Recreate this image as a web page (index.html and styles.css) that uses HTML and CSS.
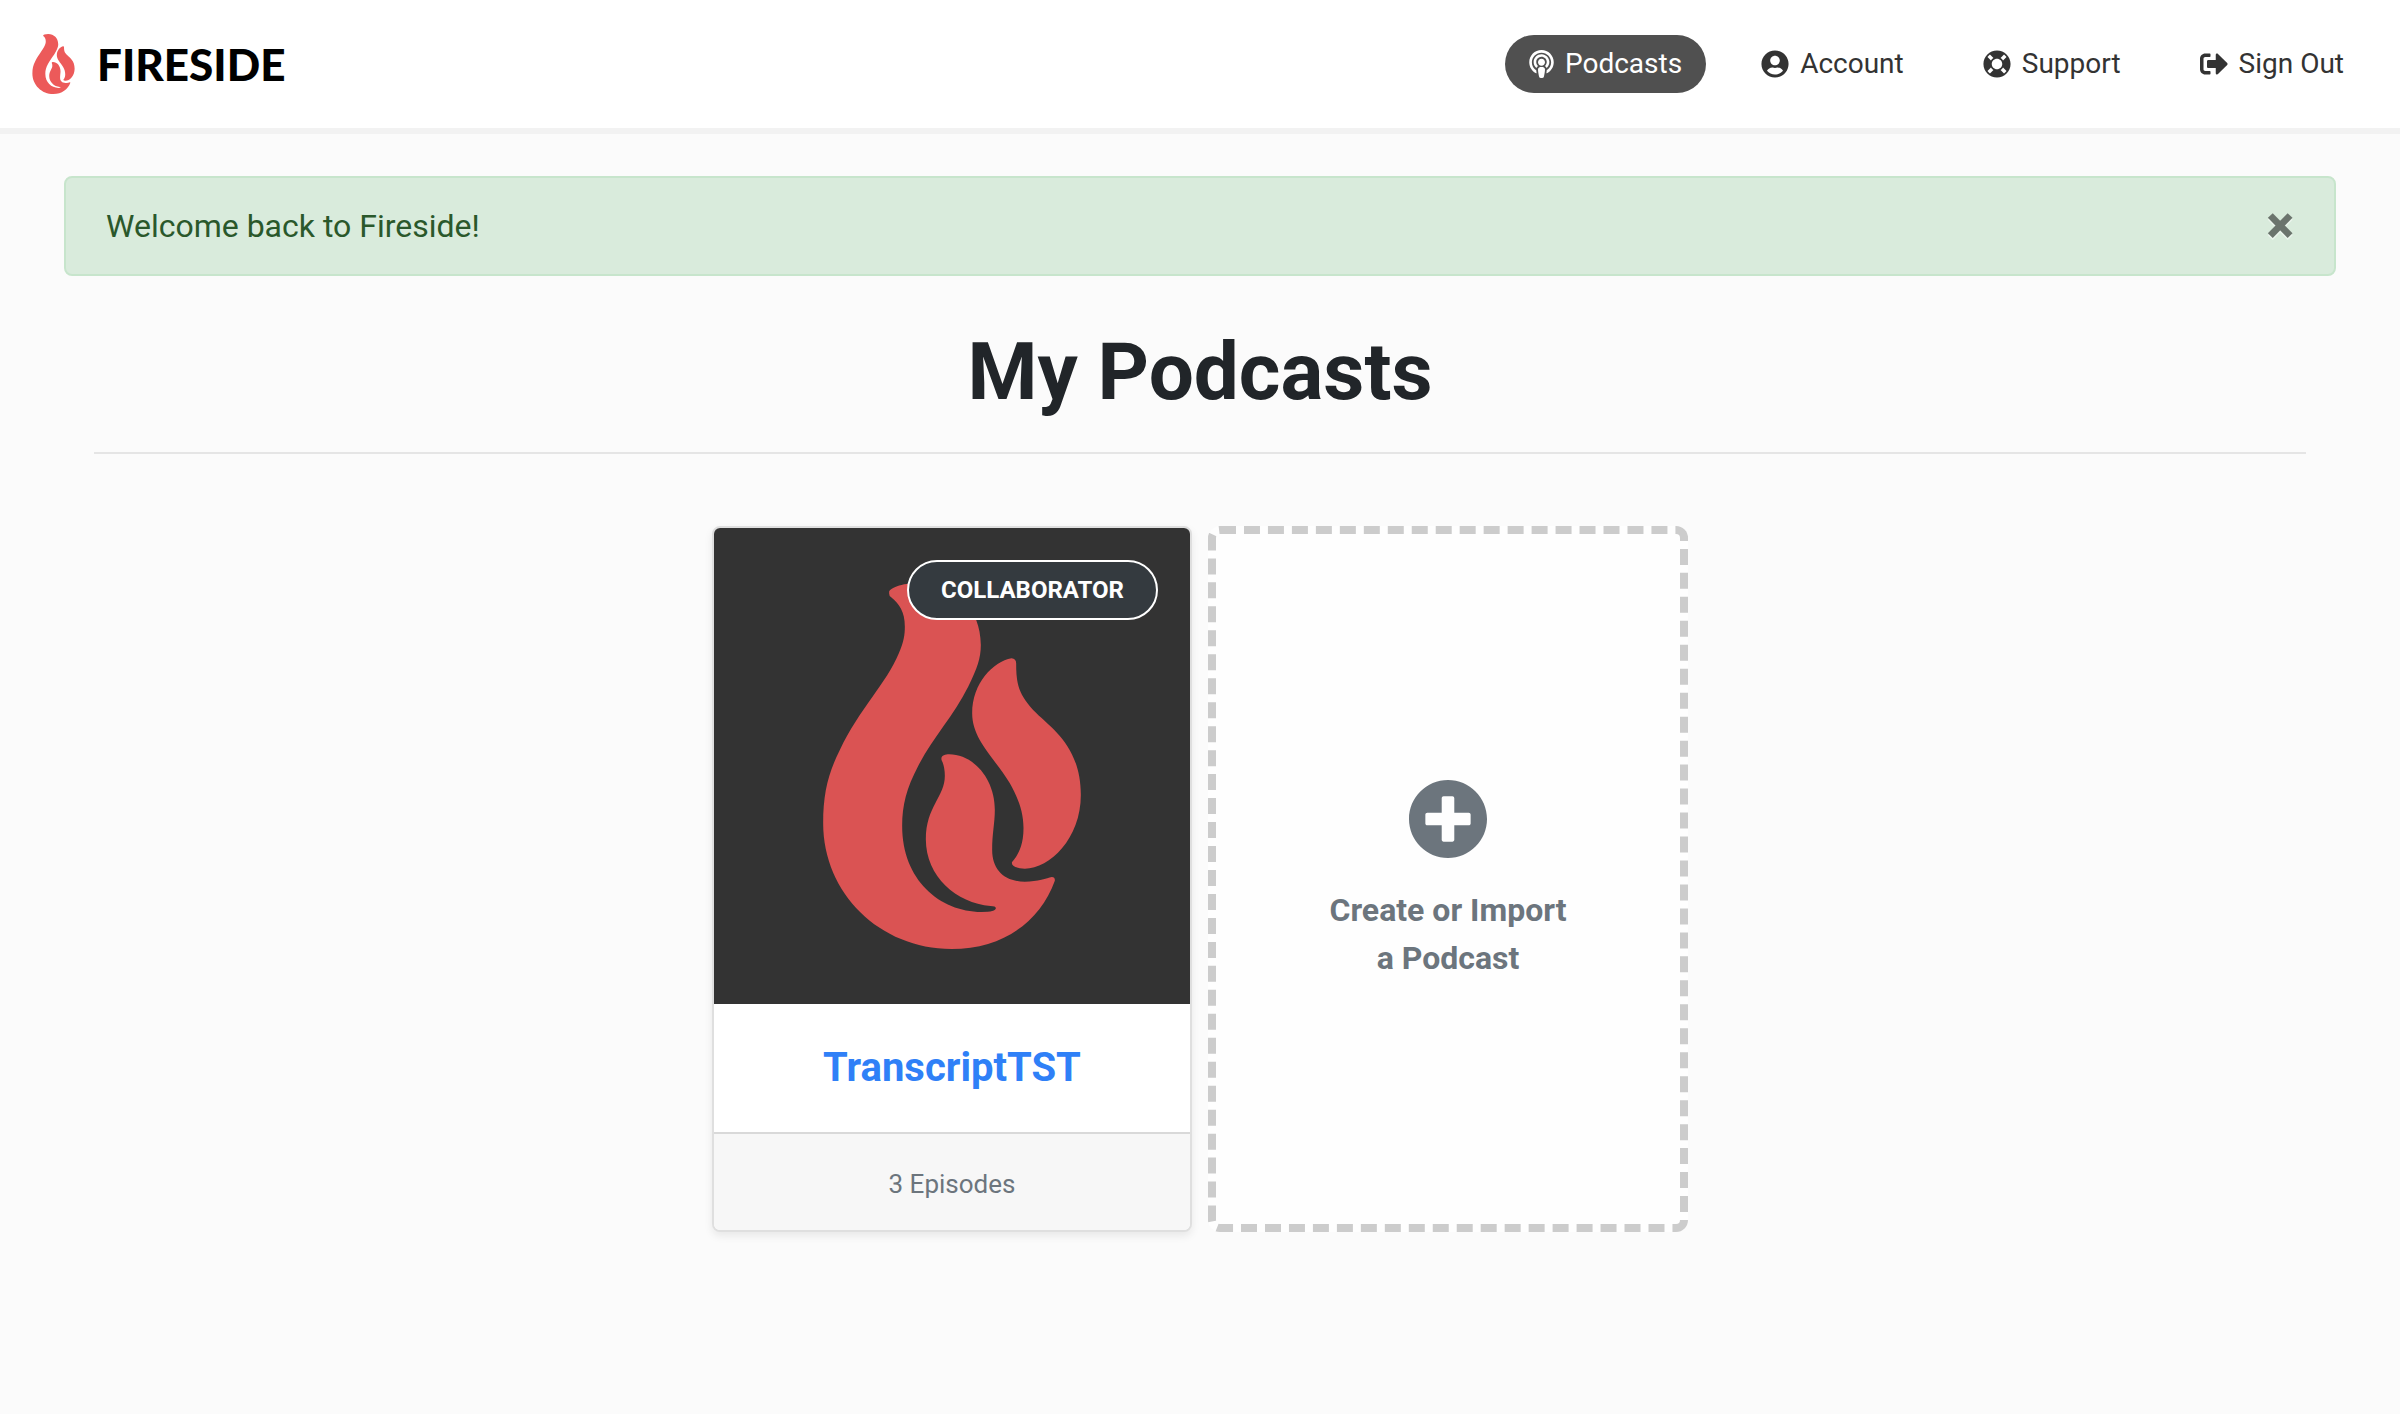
FILE: index.html
```html
<!DOCTYPE html>
<html lang="en">
<head>
<meta charset="utf-8">
<title>My Podcasts - Fireside</title>
<meta name="viewport" content="width=device-width, initial-scale=1">
<link rel="stylesheet" href="styles.css">
</head>
<body>
<svg class="sprite" aria-hidden="true">
  <symbol id="flame" viewBox="370 219 773 1098">
    <path d="M568 248C566 236 600 219 660 219C765 219 843 295 843 405C843 445 832 475 805 530C760 620 700 680 655 768C620 835 607 885 607 948C607 1110 720 1205 845 1206Q888 1206 888 1195Q888 1188 872 1188C770 1180 678 1100 678 988C678 890 735 860 735 798Q735 770 726 752C720 738 735 733 748 733C820 733 885 805 885 900C885 940 877 970 877 1020C877 1080 915 1115 975 1115C1015 1115 1040 1104 1056 1101Q1066 1101 1065 1112C1020 1235 910 1317 755 1317C540 1317 370 1150 370 940C370 850 385 790 420 720C480 595 560 520 597 430C612 395 615 375 615 350C615 305 598 282 574 262Q567 257 568 248Z"/>
    <path d="M935 445Q949 446 949 460C949 520 955 555 1010 610C1055 655 1143 710 1143 855C1143 985 1050 1076 975 1076Q936 1074 936 1058C940 1050 971 1025 971 955C971 905 955 865 930 820C885 745 817 690 817 610C817 520 880 455 935 445Z"/>
  </symbol>
</svg>

<header class="topbar">
  <a class="brand" href="#">
    <svg class="brand-mark" aria-hidden="true"><use href="#flame"/></svg>
    <span class="brand-name">FIRESIDE</span>
  </a>
  <nav class="nav" aria-label="Main">
    <a class="nav-link active" href="#">
      <svg class="icon icon-podcast" viewBox="0 0 448 512" aria-hidden="true"><path d="M267.429 488.563C262.286 507.573 242.858 512 224 512c-18.857 0-38.286-4.427-43.428-23.437C172.927 460.134 160 388.898 160 355.75c0-35.156 31.142-43.75 64-43.75s64 8.594 64 43.75c0 32.949-12.871 104.179-20.571 132.813zM156.867 288.554c-18.693-18.308-29.958-44.173-28.784-72.599 2.054-49.724 42.395-89.956 92.124-91.881C274.862 121.958 320 165.807 320 220c0 26.827-11.064 51.116-28.866 68.552-2.675 2.62-2.401 6.986.628 9.187 9.312 6.765 16.461 15.343 21.234 25.363 1.741 3.654 6.497 4.66 9.449 1.891 28.826-27.043 46.553-65.783 45.511-108.565-1.855-76.206-63.595-138.208-139.793-140.369C146.869 73.753 80 139.215 80 220c0 41.361 17.532 78.7 45.55 104.989 2.953 2.771 7.711 1.77 9.453-1.887 4.774-10.021 11.923-18.598 21.235-25.363 3.029-2.2 3.304-6.566.629-9.185zM224 0C100.204 0 0 100.185 0 224c0 89.992 52.602 165.647 125.739 201.408 4.333 2.118 9.267-1.544 8.535-6.31-2.382-15.512-4.342-30.946-5.406-44.339-.146-1.836-1.149-3.486-2.678-4.512-47.4-31.806-78.564-86.016-78.187-147.347.592-96.237 79.29-174.648 175.529-174.899C320.793 47.747 400 126.797 400 224c0 61.932-32.158 116.49-80.65 147.867-.999 14.037-3.069 30.588-5.624 47.23-.732 4.767 4.203 8.429 8.535 6.31C395.227 389.727 448 314.187 448 224 448 100.205 347.78 0 224 0zm0 160c-35.346 0-64 28.654-64 64s28.654 64 64 64 64-28.654 64-64-28.654-64-64-64z"/></svg>
      <span>Podcasts</span>
    </a>
    <a class="nav-link" href="#">
      <svg class="icon" viewBox="0 0 496 512" aria-hidden="true"><path d="M248 8C111 8 0 119 0 256s111 248 248 248 248-111 248-248S385 8 248 8zm0 96c48.6 0 88 39.4 88 88s-39.4 88-88 88-88-39.4-88-88 39.4-88 88-88zm0 344c-58.7 0-111.3-26.6-146.5-68.2 18.8-35.4 55.6-59.8 98.5-59.8 2.4 0 4.8.4 7.1 1.1 13 4.2 26.6 6.9 40.9 6.9 14.3 0 28-2.7 40.9-6.9 2.3-.7 4.7-1.1 7.1-1.1 42.9 0 79.7 24.4 98.5 59.8C359.3 421.4 306.7 448 248 448z"/></svg>
      <span>Account</span>
    </a>
    <a class="nav-link" href="#">
      <svg class="icon" viewBox="0 0 512 512" aria-hidden="true"><path d="M256 8C119.033 8 8 119.033 8 256s111.033 248 248 248 248-111.033 248-248S392.967 8 256 8zm173.696 119.559l-63.399 63.399c-10.987-18.559-26.67-34.252-45.255-45.255l63.399-63.399a218.396 218.396 0 0 1 45.255 45.255zM256 352c-53.019 0-96-42.981-96-96s42.981-96 96-96 96 42.981 96 96-42.981 96-96 96zM127.559 82.304l63.399 63.399c-18.559 10.987-34.252 26.67-45.255 45.255l-63.399-63.399a218.372 218.372 0 0 1 45.255-45.255zM82.304 384.441l63.399-63.399c10.987 18.559 26.67 34.252 45.255 45.255l-63.399 63.399a218.396 218.396 0 0 1-45.255-45.255zm302.137 45.255l-63.399-63.399c18.559-10.987 34.252-26.67 45.255-45.255l63.399 63.399a218.403 218.403 0 0 1-45.255 45.255z"/></svg>
      <span>Support</span>
    </a>
    <a class="nav-link" href="#">
      <svg class="icon" viewBox="0 0 512 512" aria-hidden="true"><path d="M497 273L329 441c-15 15-41 4.500-41-17v-96H152c-13.300 0-24-10.700-24-24v-96c0-13.300 10.700-24 24-24h136V88c0-21.400 25.900-32 41-17l168 168c9.300 9.400 9.300 24.600 0 34zM192 436v-40c0-6.600-5.400-12-12-12H96c-17.700 0-32-14.300-32-32V160c0-17.700 14.300-32 32-32h84c6.600 0 12-5.400 12-12V76c0-6.600-5.400-12-12-12H96c-53 0-96 43-96 96v192c0 53 43 96 96 96h84c6.600 0 12-5.400 12-12z"/></svg>
      <span>Sign Out</span>
    </a>
  </nav>
</header>

<main class="page">
  <div class="alert" role="alert">
    <span>Welcome back to Fireside!</span>
    <button class="alert-close" type="button" aria-label="Close">×</button>
  </div>

  <h1 class="title">My Podcasts</h1>

  <div class="cards">
    <article class="card">
      <a class="card-art" href="#" aria-label="TranscriptTST">
        <svg class="card-flame" aria-hidden="true"><use href="#flame"/></svg>
        <span class="badge">COLLABORATOR</span>
      </a>
      <h2 class="card-title"><a href="#">TranscriptTST</a></h2>
      <p class="card-footer">3 Episodes</p>
    </article>
    <a class="card-new" href="#">
      <svg class="plus" viewBox="8 8 496 496" aria-hidden="true"><path d="M256 8C119 8 8 119 8 256s111 248 248 248 248-111 248-248S393 8 256 8zm144 276c0 6.600-5.400 12-12 12h-92v92c0 6.600-5.400 12-12 12h-56c-6.600 0-12-5.400-12-12v-92h-92c-6.600 0-12-5.400-12-12v-56c0-6.600 5.400-12 12-12h92v-92c0-6.600 5.400-12 12-12h56c6.600 0 12 5.400 12 12v92h92c6.600 0 12 5.400 12 12v56z"/></svg>
      <span>Create or Import<br>a Podcast</span>
    </a>
  </div>
</main>
</body>
</html>
```
FILE: styles.css
```css
* {
  box-sizing: border-box;
}

body {
  margin: 0;
  background: #fbfbfb;
  color: #212529;
  font-family: Roboto, "Liberation Sans", sans-serif;
  font-size: 32px;
  line-height: 48px;
}

a {
  color: inherit;
  text-decoration: none;
}

.sprite {
  position: absolute;
  width: 0;
  height: 0;
}

.topbar {
  display: flex;
  align-items: center;
  justify-content: space-between;
  min-height: 134px;
  padding: 0 32px;
  background: #fff;
  border-bottom: 6px solid #f2f2f2;
}

.brand {
  display: flex;
  align-items: center;
  gap: 22px;
  color: #000;
}

.brand-mark {
  width: 43px;
  height: 60px;
  fill: #ec5a5a;
}

.brand-name {
  font-family: Lato, sans-serif;
  font-size: 44px;
  font-weight: 900;
}

.nav {
  display: flex;
  gap: 31px;
}

.nav-link {
  display: flex;
  align-items: center;
  gap: 11px;
  padding: 8px 24px;
  border-radius: 32px;
  color: #333;
  font-size: 28px;
  line-height: 42px;
}

.nav-link.active {
  background: #505050;
  color: #fff;
}

.icon {
  width: 28px;
  height: 28px;
  fill: currentColor;
}

.icon-podcast {
  width: 25px;
}

.page {
  padding: 42px 64px 64px;
}

.alert {
  display: flex;
  align-items: center;
  justify-content: space-between;
  padding: 24px 40px;
  background: #d9ebdc;
  border: 2px solid #c7e5cc;
  border-radius: 8px;
  color: #2a582b;
}

.alert-close {
  padding: 0;
  border: 0;
  background: none;
  color: #000;
  font: 900 52px/48px Roboto, sans-serif;
  text-shadow: 0 2px 0 #fff;
  opacity: .5;
}

.title {
  margin: 48px 30px 72px;
  padding-bottom: 32px;
  border-bottom: 2px solid #e5e5e5;
  font-size: 80px;
  line-height: 96px;
  text-align: center;
}

.cards {
  display: flex;
  flex-wrap: wrap;
  justify-content: center;
  gap: 16px;
}

.card,
.card-new {
  width: 480px;
  display: flex;
  flex-direction: column;
  text-align: center;
}

.card {
  background: #fff;
  border: 2px solid #dfdfdf;
  border-radius: 8px;
  box-shadow: 0 4px 8px rgba(0, 0, 0, .08);
}

.card-art {
  position: relative;
  display: flex;
  align-items: center;
  justify-content: center;
  aspect-ratio: 1;
  background: #333;
  border-radius: 6px 6px 0 0;
}

.card-flame {
  width: 258px;
  height: 366px;
  fill: #da5353;
}

.badge {
  position: absolute;
  top: 32px;
  right: 32px;
  padding: 8px 32px;
  background: #343a3f;
  border: 2px solid #fff;
  border-radius: 30px;
  color: #fff;
  font-size: 24px;
  font-weight: bold;
  line-height: 40px;
}

.card-title {
  margin: 0;
  padding: 40px;
  color: #2f80f7;
  font-size: 40px;
  line-height: 48px;
}

.card-footer {
  margin: 0;
  padding: 26px 24px 22px;
  background: #f7f7f7;
  border-top: 2px solid #d9d9d9;
  border-radius: 0 0 6px 6px;
  color: #6c757d;
  font-size: 26px;
}

.card-new {
  align-items: center;
  justify-content: center;
  gap: 28px;
  padding-top: 4px;
  background: #fefefe;
  border: 8px dashed #ccc;
  border-radius: 12px;
  color: #6c757d;
  font-weight: bold;
}

.plus {
  width: 78px;
  height: 78px;
  fill: currentColor;
}
```
